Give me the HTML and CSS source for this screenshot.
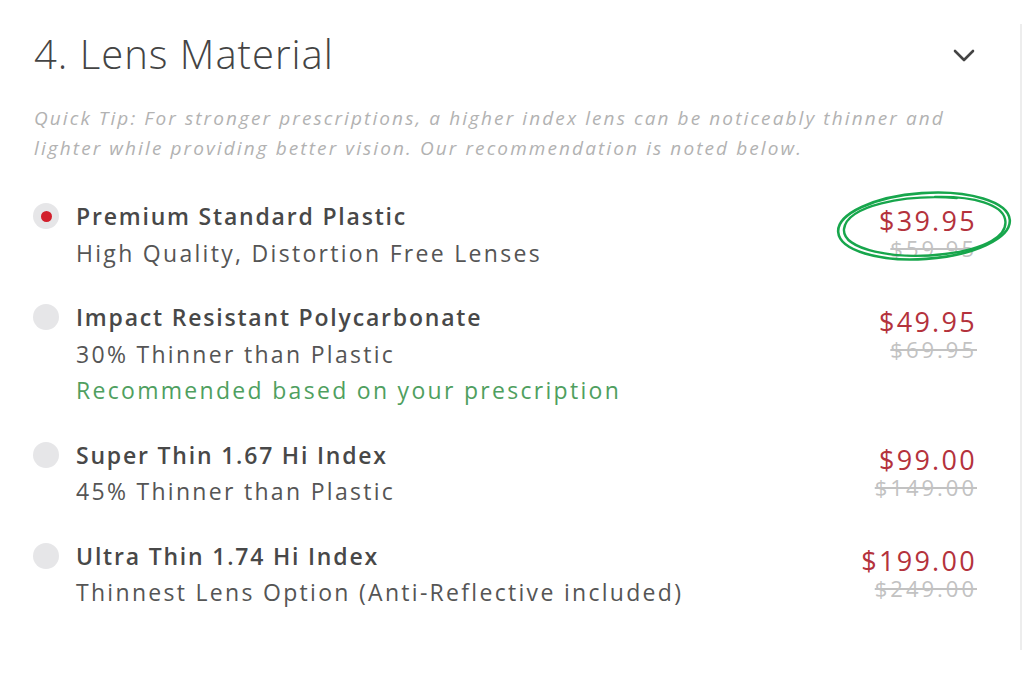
FILE: index.html
```html
<!DOCTYPE html>
<html lang="en">

<head>
    <meta charset="UTF-8">
    <meta name="viewport" content="width=device-width, initial-scale=1.0">
    <title>Lens Material</title>
    <link rel="stylesheet" href="styles.css">
</head>

<body>
    <div class="panel">
        <div class="step-header">
            <h2>4. Lens Material</h2>
            <svg class="chevron" width="22" height="14" viewBox="0 0 22 14">
                <path d="M2 2 L11 11 L20 2" fill="none" stroke="#444" stroke-width="2.6" stroke-linecap="round" stroke-linejoin="round" />
            </svg>
        </div>

        <p class="tip">Quick Tip: For stronger prescriptions, a higher index lens can be noticeably thinner and<br>lighter while providing better vision. Our recommendation is noted below.</p>

        <div class="options">
            <div class="option">
                <span class="radio checked"></span>
                <div class="option-text">
                    <div class="option-name">Premium Standard Plastic</div>
                    <div class="option-desc">High Quality, Distortion Free Lenses</div>
                </div>
                <div class="price">
                    <div class="price-now">$39.95</div>
                    <div class="price-old">$59.95</div>
                    <!-- hand-drawn loop around the best deal -->
                    <svg class="circled" width="182" height="78" viewBox="0 0 182 78">
                        <ellipse cx="91" cy="38" rx="86" ry="33" transform="rotate(-4 91 38)" fill="none" stroke="#17a64c" stroke-width="2.6" />
                        <path d="M124 10 C70 6 14 18 11 41 C9 62 62 72 112 66 C152 61 176 48 172 31 C169 17 142 8 102 9" fill="none" stroke="#17a64c" stroke-width="2.4" stroke-linecap="round" />
                    </svg>
                </div>
            </div>

            <div class="option">
                <span class="radio"></span>
                <div class="option-text">
                    <div class="option-name">Impact Resistant Polycarbonate</div>
                    <div class="option-desc">30% Thinner than Plastic</div>
                    <div class="option-note">Recommended based on your prescription</div>
                </div>
                <div class="price">
                    <div class="price-now">$49.95</div>
                    <div class="price-old">$69.95</div>
                </div>
            </div>

            <div class="option">
                <span class="radio"></span>
                <div class="option-text">
                    <div class="option-name">Super Thin 1.67 Hi Index</div>
                    <div class="option-desc">45% Thinner than Plastic</div>
                </div>
                <div class="price">
                    <div class="price-now">$99.00</div>
                    <div class="price-old">$149.00</div>
                </div>
            </div>

            <div class="option">
                <span class="radio"></span>
                <div class="option-text">
                    <div class="option-name">Ultra Thin 1.74 Hi Index</div>
                    <div class="option-desc">Thinnest Lens Option (Anti-Reflective included)</div>
                </div>
                <div class="price">
                    <div class="price-now">$199.00</div>
                    <div class="price-old">$249.00</div>
                </div>
            </div>
        </div>
    </div>
</body>

</html>
```

FILE: styles.css
```css
body {
    font-family: "Open Sans", Arial, sans-serif;
    margin: 0;
    padding: 0;
    background-color: #fff;
    color: #4a4a4a;
}

.panel {
    width: 1022px;
    height: 626px;
    margin-top: 24px;
    padding: 6px 46px 0 34px;
    box-sizing: border-box;
    border-right: 2px solid #ededed;
}

.step-header {
    display: flex;
    justify-content: space-between;
    align-items: center;
}

.step-header h2 {
    margin: 0;
    font-size: 40px;
    font-weight: 300;
    line-height: 48px;
    letter-spacing: 1px;
    color: #444;
}

.chevron {
    margin: 4px -1px 0 0;
}

.tip {
    margin: 25px 0 35px;
    font-size: 19px;
    font-style: italic;
    line-height: 30px;
    letter-spacing: 2.1px;
    color: #b2b2b2;
}

.options {
    display: flex;
    flex-direction: column;
    gap: 28px;
}

.option {
    display: flex;
    align-items: flex-start;
}

.radio {
    flex: none;
    width: 26px;
    height: 26px;
    margin: 5px 17px 0 -1px;
    border-radius: 50%;
    background-color: #e6e6e8;
    display: flex;
    align-items: center;
    justify-content: center;
}

.radio.checked::after {
    content: "";
    width: 11px;
    height: 11px;
    border-radius: 50%;
    background-color: #d21f2b;
}

.option-text {
    flex: 1;
    font-size: 23px;
    line-height: 36.5px;
    letter-spacing: 2.3px;
}

.option-name {
    font-weight: 600;
    letter-spacing: 1.8px;
    color: #484848;
}

.option-desc {
    color: #555;
}

.option-note {
    color: #4f9f60;
}

.price {
    position: relative;
    margin: 7px -3px 0 0;
    text-align: right;
}

.price-now {
    font-size: 27px;
    line-height: 31px;
    letter-spacing: 2.3px;
    color: #b4323c;
}

.price-old {
    font-size: 22px;
    line-height: 25px;
    letter-spacing: 3px;
    color: #c2c2c2;
    text-decoration: line-through;
}

.circled {
    position: absolute;
    right: -38px;
    top: -17px;
    pointer-events: none;
}
```
